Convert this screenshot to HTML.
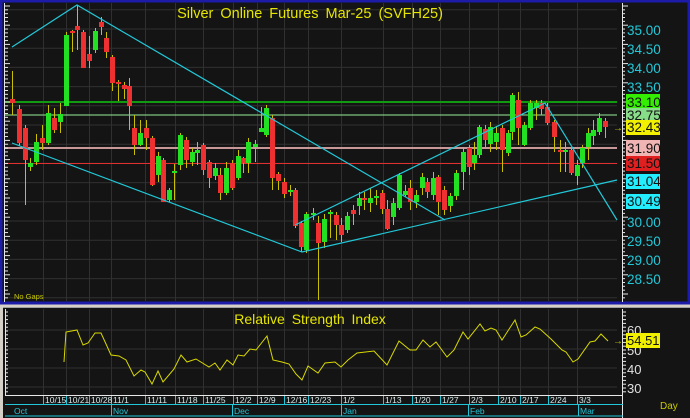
<!DOCTYPE html>
<html><head><meta charset="utf-8"><style>
html,body{margin:0;padding:0;background:#d4d0c8;width:690px;height:418px;overflow:hidden}
svg{display:block}
text{font-family:"Liberation Sans",sans-serif}
</style></head><body>
<svg id="s" width="690" height="418" xmlns="http://www.w3.org/2000/svg">
<rect x="0" y="0" width="690" height="418" fill="#d4d0c8"/>
<rect x="1" y="1" width="688" height="302" fill="#141414" stroke="#1c1ca8" stroke-width="3"/>
<line x1="4.5" y1="3" x2="4.5" y2="302" stroke="#e8e8e8" stroke-width="1"/>
<g id="grid" stroke="#303030" stroke-width="1"></g>
<g id="hl">
<line x1="5" y1="102" x2="617" y2="102" stroke="#119911" stroke-width="2"/>
<line x1="5" y1="115" x2="617" y2="115" stroke="#99ee99" stroke-width="1"/>
<line x1="5" y1="148" x2="617" y2="148" stroke="#c89898" stroke-width="2"/>
<line x1="5" y1="163.5" x2="617" y2="163.5" stroke="#e03030" stroke-width="1"/>
</g>
<g id="candles"></g>
<g fill="none" stroke="#22c8d8" stroke-width="1.2">
<polyline points="12,47 77,5 445,220"/>
<polyline points="12,143 302,252 617,180"/>
<polyline points="295,225 545,103 617,220"/>
</g>
<text x="310" y="18" fill="#e6e600" font-size="14.5" text-anchor="middle" word-spacing="3">Silver Online Futures Mar-25 (SVFH25)</text>
<text x="14" y="299" fill="#c8c800" font-size="7.5">No Gaps</text>
<line x1="622.5" y1="3" x2="622.5" y2="302" stroke="#e8e8e8"/>
<g id="rticks" stroke="#e8e8e8"></g>
<g font-size="13.5" fill="#22c8d8">
<text x="627" y="35">35.00</text><text x="627" y="54">34.50</text><text x="627" y="73">34.00</text><text x="627" y="92">33.50</text>
<text x="627" y="227">30.00</text><text x="627" y="246">29.50</text><text x="627" y="265">29.00</text><text x="627" y="284">28.50</text>
</g>
<rect x="626" y="94" width="34" height="16" fill="#33ee00"/><text x="627" y="107" font-size="13.5" fill="#111">33.10</text>
<rect x="626" y="108" width="34" height="15" fill="#88dd88"/><text x="627" y="120" font-size="13.5" fill="#111">32.75</text>
<rect x="626" y="120" width="34" height="15" fill="#f0f000"/><text x="627" y="132" font-size="13.5" fill="#111">32.43</text>
<text x="613" y="131" font-size="10" fill="#c8c800">→</text>
<rect x="626" y="140" width="34" height="16" fill="#f0b4b4"/><text x="627" y="153" font-size="13.5" fill="#111">31.90</text>
<rect x="626" y="156" width="34" height="15" fill="#e02020"/><text x="627" y="168" font-size="13.5" fill="#111">31.50</text>
<rect x="626" y="174" width="34" height="15" fill="#22eeff"/><text x="627" y="186" font-size="13.5" fill="#111">31.04</text>
<rect x="626" y="194" width="34" height="15" fill="#22eeff"/><text x="627" y="206" font-size="13.5" fill="#111">30.49</text>

<rect x="3" y="308" width="687" height="110" fill="#141414"/>
<line x1="3" y1="307.5" x2="690" y2="307.5" stroke="#a0a0a0"/>
<line x1="5.5" y1="309" x2="5.5" y2="395" stroke="#e8e8e8"/>
<g id="grid2" stroke="#303030"></g>
<line x1="5" y1="395.5" x2="623" y2="395.5" stroke="#e8e8e8"/>
<line x1="622.5" y1="309" x2="622.5" y2="418" stroke="#e8e8e8"/>
<line x1="5" y1="404.5" x2="623" y2="404.5" stroke="#22c8d8"/>
<line x1="5" y1="416" x2="623" y2="416" stroke="#22c8d8"/>
<g id="dt" stroke="#22c8d8"></g>
<g id="dl" font-size="8.5" fill="#d8e8e8"></g>
<g font-size="8.5" fill="#22c8d8">
<text x="14" y="414">Oct</text><text x="113" y="414">Nov</text><text x="234" y="414">Dec</text><text x="343" y="414">Jan</text><text x="470" y="414">Feb</text><text x="580" y="414">Mar</text>
</g>
<text x="310" y="324" fill="#e6e600" font-size="14" text-anchor="middle" word-spacing="3">Relative Strength Index</text>
<polyline fill="none" stroke="#d8d800" stroke-width="1" points="64,362 66,332 77,330 83,345 88,343 95,333 101,333 111,355 119,356 126,360 134,376 141,370 145,372 152,384 158,371 163,382 174,369 181,355 187,362 196,359 209,367 215,363 220,370 227,360 233,365 238,355 244,356 250,349 256,350 267,336 273,360 282,362 289,364 296,374 302,380 308,366 318,373 325,363 335,362 341,367 348,360 357,353 374,351 387,365 399,341 410,350 416,350 423,340 430,347 436,342 447,357 454,350 463,332 468,339 480,324 485,331 491,328 496,330 502,340 515,320 521,337 526,335 535,327 540,329 551,339 562,350 566,352 573,362 578,359 590,342 595,341 601,334 608,341"/>
<g id="rt2" stroke="#e8e8e8"></g>
<g font-size="13" fill="#e0e0e0">
<text x="627" y="335">60</text><text x="627" y="355">50</text><text x="627" y="374">40</text><text x="627" y="393">30</text>
</g>
<rect x="626" y="333" width="34" height="15" fill="#f0f000"/><text x="627" y="345" font-size="13" fill="#111">54.51</text>
<text x="613" y="344" font-size="10" fill="#c8c800">→</text>
<text x="660" y="409" font-size="10" fill="#c8c800">Day</text>
</svg>
<script>
var NS="http://www.w3.org/2000/svg";
function el(p,t,a){var e=document.createElementNS(NS,t);for(var k in a)e.setAttribute(k,a[k]);document.getElementById(p).appendChild(e);return e;}
var vx=[43,66,89,111,145,175,203,233,257,284,308,341,383,412,440,469,498,520,548,577];
for(var k=-1;k<15;k++){var y=29+k*19.2;if(y>4&&y<301)el("grid","line",{x1:5,y1:y,x2:617,y2:y});}
vx.forEach(function(x){el("grid","line",{x1:x+.5,y1:3,x2:x+.5,y2:301});el("grid2","line",{x1:x+.5,y1:309,x2:x+.5,y2:395});el("dt","line",{x1:x+.5,y1:396,x2:x+.5,y2:405});});
[330,349,368,387].forEach(function(y){el("grid2","line",{x1:6,y1:y,x2:617,y2:y});});
[111,232,341,468,578].forEach(function(x){el("dt","line",{x1:x+.5,y1:405,x2:x+.5,y2:416});});
var dl=["10/15","10/21","10/28","11/1","11/11","11/18","11/25","12/2","12/9","12/16","12/23","1/2","1/13","1/20","1/27","2/3","2/10","2/17","2/24","3/3"];
vx.forEach(function(x,i){var t=el("dl","text",{x:x+2,y:403});t.textContent=dl[i];});
for(var y=6;y<300;y+=3.84){el("rticks","line",{x1:622,y1:y,x2:(Math.round((y-6)/3.84)%5==0?628:625),y2:y});el("rticks","line",{x1:5,y1:y,x2:(Math.round((y-6)/3.84)%5==0?10:8),y2:y});}
for(var y=312;y<395;y+=3.8){el("rt2","line",{x1:622,y1:y,x2:626,y2:y});el("rt2","line",{x1:5,y1:y,x2:8,y2:y});}
var C=[[12,99,103,'r',71,115],[19,109,143,'r',105,146],[25,128,160,'r',125,205],[30,163,167,'g',158,171],[36,142,162,'g',134,165],[42,138,143,'r',125,150],[48,113,143,'g',105,145],[54,118,130,'r',108,133],[60,114,122,'g',103,133],[66,35,106,'g',32,106],[72,31,33,'r',30,52],[77,26,30,'r',5,50],[83,32,68,'r',30,68],[89,54,61,'r',36,68],[95,31,50,'g',28,53],[101,22,27,'r',17,35],[106,38,52,'r',32,58],[112,57,83,'r',55,91],[118,82,84,'r',80,101],[124,85,89,'r',82,99],[129,86,106,'r',78,130],[134,128,145,'r',115,155],[140,133,145,'g',120,146],[146,128,138,'r',120,150],[152,138,185,'r',136,186],[158,156,175,'g',152,182],[163,160,202,'r',158,202],[169,190,200,'g',188,202],[174,171,172,'g',164,200],[180,135,165,'g',133,170],[186,140,160,'r',137,168],[192,152,162,'g',148,166],[197,150,153,'g',142,165],[203,145,170,'r',143,175],[209,162,178,'r',160,188],[215,168,176,'g',163,180],[220,175,193,'r',168,200],[226,168,193,'g',162,195],[232,163,188,'r',160,190],[238,156,178,'g',150,180],[243,158,163,'r',157,173],[248,142,163,'g',138,173],[255,144,147,'g',140,162],[261,128,132,'g',107,128],[266,108,135,'g',105,137],[272,118,178,'r',115,190],[278,174,181,'r',172,190],[284,182,194,'r',178,198],[290,190,191,'g',185,196],[295,190,226,'r',188,228],[301,223,247,'r',221,252],[306,214,250,'g',212,253],[313,213,215,'g',208,220],[318,223,243,'r',216,300],[324,219,242,'g',214,248],[330,212,214,'g',210,238],[336,215,225,'r',212,240],[341,225,235,'r',218,242],[347,216,230,'g',212,233],[353,210,214,'r',205,225],[359,198,206,'g',192,215],[364,198,200,'r',192,210],[370,198,203,'g',188,212],[376,196,197,'g',190,205],[382,193,209,'r',190,214],[387,209,229,'r',200,230],[393,203,217,'g',198,225],[399,175,208,'g',173,210],[405,191,195,'g',185,197],[410,188,202,'r',180,210],[416,195,202,'g',190,208],[422,177,188,'g',173,195],[427,182,192,'r',178,198],[433,178,195,'g',172,200],[438,177,202,'r',175,215],[444,190,210,'r',186,215],[450,196,206,'g',193,212],[456,173,196,'g',170,200],[463,152,172,'g',147,190],[469,148,167,'r',145,175],[474,155,163,'g',142,170],[479,127,155,'g',125,158],[485,129,140,'r',125,147],[490,127,144,'g',122,152],[496,133,142,'g',126,150],[502,128,150,'r',125,172],[508,133,153,'g',130,156],[512,95,132,'g',93,140],[518,100,128,'r',92,145],[524,125,145,'g',122,146],[530,103,128,'g',100,130],[536,103,108,'g',100,120],[541,103,109,'r',100,115],[547,107,123,'r',103,125],[554,122,137,'r',120,152],[560,150,152,'r',140,172],[565,150,151,'g',142,172],[571,150,173,'r',148,175],[577,165,176,'g',160,185],[582,148,163,'g',145,168],[588,133,147,'g',128,160],[593,130,136,'g',120,145],[599,118,132,'g',113,135],[605,121,127,'r',118,138]];
C.forEach(function(c){el("candles","line",{x1:c[0]+.5,y1:c[4],x2:c[0]+.5,y2:c[5],stroke:"#c8c000","stroke-width":1});
var h=Math.max(2,c[2]-c[1]);el("candles","rect",{x:c[0]-2,y:c[1],width:5,height:h,fill:c[3]=='g'?'#22e022':'#ee3030'});});
</script>
</body></html>
